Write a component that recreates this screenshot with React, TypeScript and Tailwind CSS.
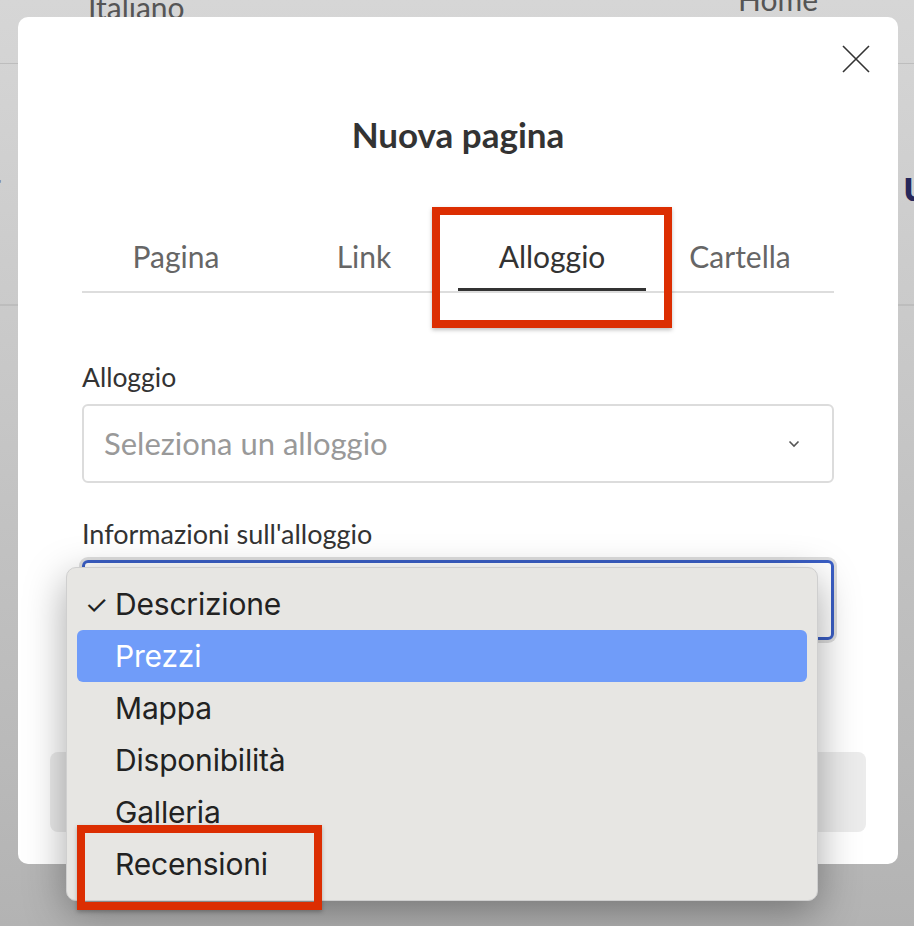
import { useState } from 'react'

const tabs = ['Pagina', 'Link', 'Alloggio', 'Cartella']
const options = ['Descrizione', 'Prezzi', 'Mappa', 'Disponibilità', 'Galleria', 'Recensioni']

export default function App() {
  const [active, setActive] = useState('Alloggio')
  const selected = 'Descrizione'
  const hovered = 'Prezzi'

  return (
    <div className="relative w-[914px] h-[926px] overflow-hidden bg-linear-to-b from-[#d6d6d6] to-[#b3b3b3] font-['Lato',sans-serif]">
      {/* page behind the overlay */}
      <header className="h-16 border-b border-[#bdbdbd] flex justify-between pl-[88px] pr-[96px]">
        <span className="text-[30px] text-[#555] leading-none -mt-[8px]">Italiano</span>
        <span className="text-[30px] text-[#555] leading-none -mt-[16px]">Home</span>
      </header>
      <div className="h-[242px] border-b-2 border-[#bdbdbd] flex justify-between items-center">
        <span className="text-[30px] text-[#7a7a8a] -ml-[10px]">r</span>
        <span className="text-[44px] font-bold text-[#26275a] -mr-[14px]">u</span>
      </div>

      {/* modal */}
      <div className="absolute left-[18px] top-[17px] w-[880px] bg-white rounded-[10px] flex flex-col pb-[32px]">
        <button className="absolute right-[28px] top-[28px] w-[28px] h-[28px]">
          <svg viewBox="0 0 28 28" width="28" height="28" stroke="#333" strokeWidth="1.6" fill="none">
            <path d="M1 1 L27 27 M27 1 L1 27" />
          </svg>
        </button>

        <h2 className="mt-[97px] text-center text-[35px] leading-[40px] font-bold text-[#333]">Nuova pagina</h2>

        <div className="mx-[64px] mt-[67px] grid grid-cols-4 border-b-2 border-[#dddddd]">
          {tabs.map((t) => (
            <button
              key={t}
              onClick={() => setActive(t)}
              className={`h-[70px] flex items-center justify-center text-[30px] ${
                active === t ? 'text-[#333] border-b-[3px] border-[#333] -mb-[2px] pt-[3px]' : 'text-[#666]'
              }`}
            >
              {t}
            </button>
          ))}
        </div>

        <div className="mx-[64px] flex flex-col">
          <label className="mt-[69px] text-[26.5px] leading-[30px] text-[#333]">Alloggio</label>
          <div className="mt-[12px] h-[79px] border-2 border-[#dcdcdc] rounded-[6px] flex items-center justify-between pl-[20px] pr-[32px]">
            <span className="text-[31px] text-[#999]">Seleziona un alloggio</span>
            <svg viewBox="0 0 12 8" width="12" height="8" fill="none" stroke="#555" strokeWidth="1.6">
              <path d="M1.5 1.5 L6 6 L10.5 1.5" />
            </svg>
          </div>

          <label className="mt-[36px] text-[27px] leading-[30px] text-[#333]">Informazioni sull'alloggio</label>
          <div className="mt-[11px] h-[80px] border-[3px] border-[#3a5ec4] rounded-[6px] shadow-[0_0_0_3px_#dedede]" />
        </div>

        <div className="mx-[32px] mt-[112px] h-[80px] rounded-[8px] bg-[#ececec]" />
      </div>

      {/* native select popup */}
      <div className="absolute left-[66px] top-[567px] w-[752px] rounded-[10px] bg-[#e7e6e3] border border-[#cfcfcf] shadow-[0_12px_40px_rgba(0,0,0,0.35)] py-[10px] px-[10px] font-['Inter',sans-serif]">
        {options.map((o) => (
          <div
            key={o}
            className={`h-[52px] flex items-center rounded-[6px] text-[30px] tracking-[-0.2px] ${
              o === hovered ? 'bg-[#709cf9] text-white' : 'text-[#222]'
            }`}
          >
            <span className="w-[38px] pl-[8px] text-[26px]">{o === selected ? '✓' : ''}</span>
            <span>{o}</span>
          </div>
        ))}
      </div>

      {/* annotation boxes */}
      <div className="absolute left-[432px] top-[207px] w-[240px] h-[121px] border-[8px] border-[#dc2e02] shadow-[0_2px_4px_rgba(0,0,0,0.25)]" />
      <div className="absolute left-[77px] top-[825px] w-[245px] h-[85px] border-[8px] border-[#dc2e02] shadow-[0_2px_4px_rgba(0,0,0,0.25)]" />
    </div>
  )
}
